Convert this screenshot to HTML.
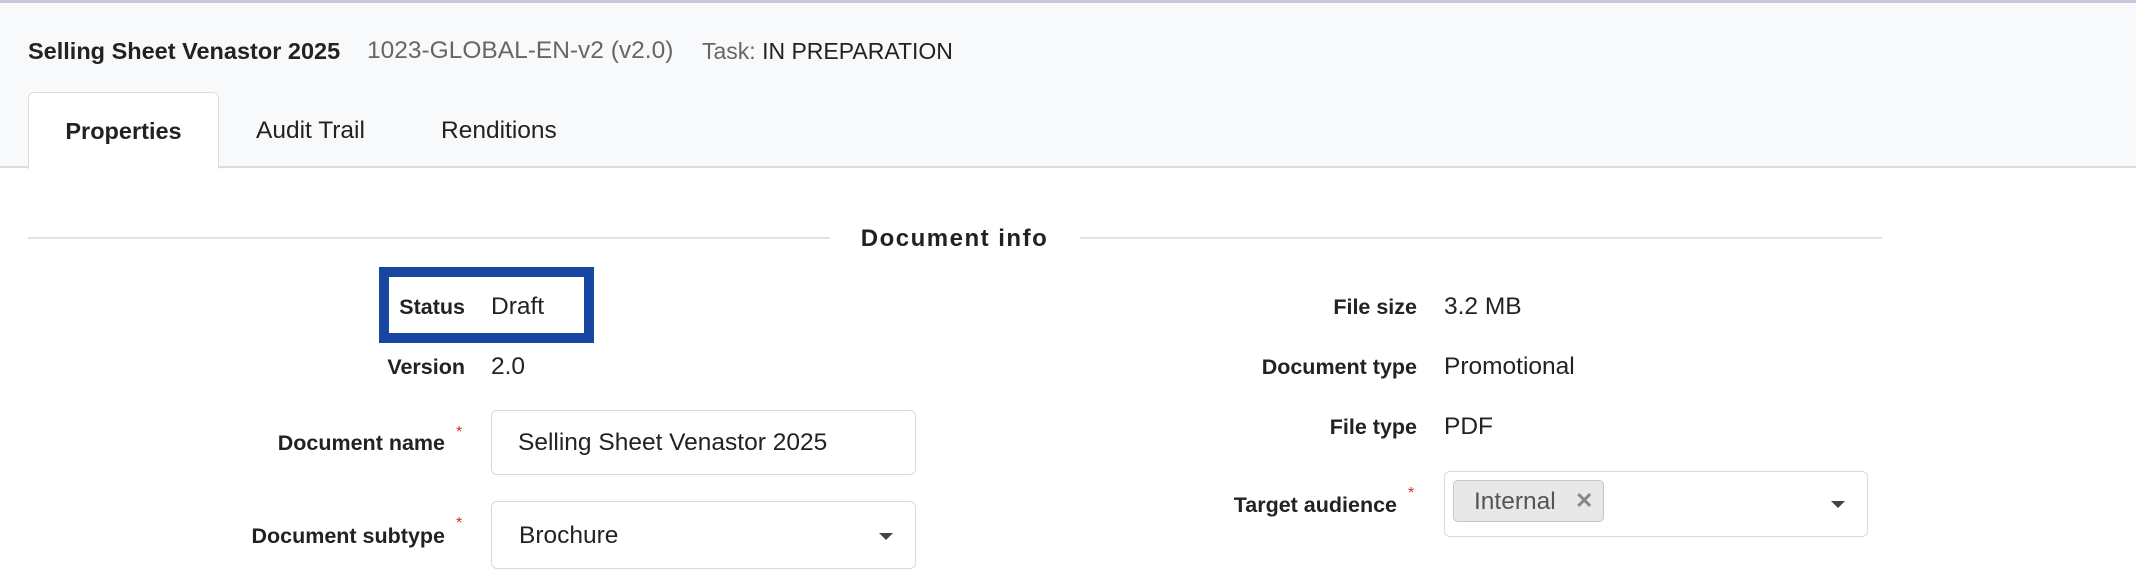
<!DOCTYPE html>
<html><head><meta charset="utf-8"><style>
*{margin:0;padding:0;box-sizing:border-box}
body{width:2136px;height:580px;overflow:hidden;background:#fff;font-family:"Liberation Sans",Arial,sans-serif;color:#222;position:relative}
.a{position:absolute;white-space:nowrap}
.hdr{position:absolute;left:0;top:0;width:2136px;height:168px;background:#f8f9fb;border-top:3px solid #ccc7dd;border-bottom:2px solid #dcdcdf}
.lbl{font-weight:bold;font-size:21.5px;text-align:right;line-height:24px}
.val{font-size:24.5px;line-height:24px}
.star{color:#d0312d;font-size:16px}
.box{position:absolute;border:1px solid #d9d9dc;border-radius:6px;background:#fff}
.arrow{position:absolute;width:0;height:0;border-left:7px solid transparent;border-right:7px solid transparent;border-top:7px solid #444}
</style></head><body>
<div class="hdr"></div>
<div class="a" style="left:28px;top:39px;font-size:23.5px;font-weight:bold;line-height:24px">Selling Sheet Venastor 2025</div>
<div class="a" style="left:367px;top:39px;font-size:24.5px;color:#666;line-height:24px">1023-GLOBAL-EN-v2 (v2.0)</div>
<div class="a" style="left:702px;top:39px;font-size:23px;line-height:24px"><span style="color:#666">Task:</span> IN PREPARATION</div>
<div style="position:absolute;left:28px;top:92px;width:191px;height:77px;background:#fff;border:1px solid #dcdcdf;border-bottom:none;border-radius:6px 6px 0 0"></div>
<div class="a" style="left:28px;width:191px;text-align:center;top:119px;font-size:23.5px;font-weight:bold;line-height:24px">Properties</div>
<div class="a" style="left:256px;top:119px;font-size:24.5px;line-height:24px">Audit Trail</div>
<div class="a" style="left:441px;top:119px;font-size:24.5px;line-height:24px">Renditions</div>

<div style="position:absolute;left:28px;top:237px;width:802px;height:2px;background:#e2e2e4"></div>
<div style="position:absolute;left:1080px;top:237px;width:802px;height:2px;background:#e2e2e4"></div>
<div class="a" style="left:857px;top:225px;width:195px;text-align:center;font-size:24px;font-weight:bold;letter-spacing:1.5px;line-height:28px">Document info</div>

<div style="position:absolute;left:379px;top:267px;width:215px;height:76px;border:10px solid #1746a2"></div>
<div class="a lbl" style="left:300px;width:165px;top:295px">Status</div>
<div class="a val" style="left:491px;top:295px">Draft</div>
<div class="a lbl" style="left:300px;width:165px;top:355px">Version</div>
<div class="a val" style="left:491px;top:355px">2.0</div>

<div class="a lbl" style="left:200px;width:245px;top:431px">Document name</div>
<div class="a star" style="left:456px;top:424px">*</div>
<div class="box" style="left:491px;top:410px;width:425px;height:65px"></div>
<div class="a val" style="left:518px;top:431px">Selling Sheet Venastor 2025</div>

<div class="a lbl" style="left:200px;width:245px;top:524px">Document subtype</div>
<div class="a star" style="left:456px;top:515px">*</div>
<div class="box" style="left:491px;top:501px;width:425px;height:68px"></div>
<div class="a val" style="left:519px;top:524px">Brochure</div>
<div class="arrow" style="left:879px;top:533px"></div>

<div class="a lbl" style="left:1200px;width:217px;top:295px">File size</div>
<div class="a val" style="left:1444px;top:295px">3.2 MB</div>
<div class="a lbl" style="left:1200px;width:217px;top:355px">Document type</div>
<div class="a val" style="left:1444px;top:355px">Promotional</div>
<div class="a lbl" style="left:1200px;width:217px;top:415px">File type</div>
<div class="a val" style="left:1444px;top:415px">PDF</div>

<div class="a lbl" style="left:1150px;width:247px;top:493px">Target audience</div>
<div class="a star" style="left:1408px;top:485px">*</div>
<div class="box" style="left:1444px;top:471px;width:424px;height:66px"></div>
<div style="position:absolute;left:1453px;top:480px;width:151px;height:42px;background:#e8e8e8;border:1px solid #c6c6c6;border-radius:5px"></div>
<div class="a val" style="left:1474px;top:490px;color:#555">Internal</div>
<div class="a" style="left:1575px;top:489px;font-size:22px;font-weight:bold;color:#888;line-height:24px">✕</div>
<div class="arrow" style="left:1831px;top:501px"></div>
</body></html>
